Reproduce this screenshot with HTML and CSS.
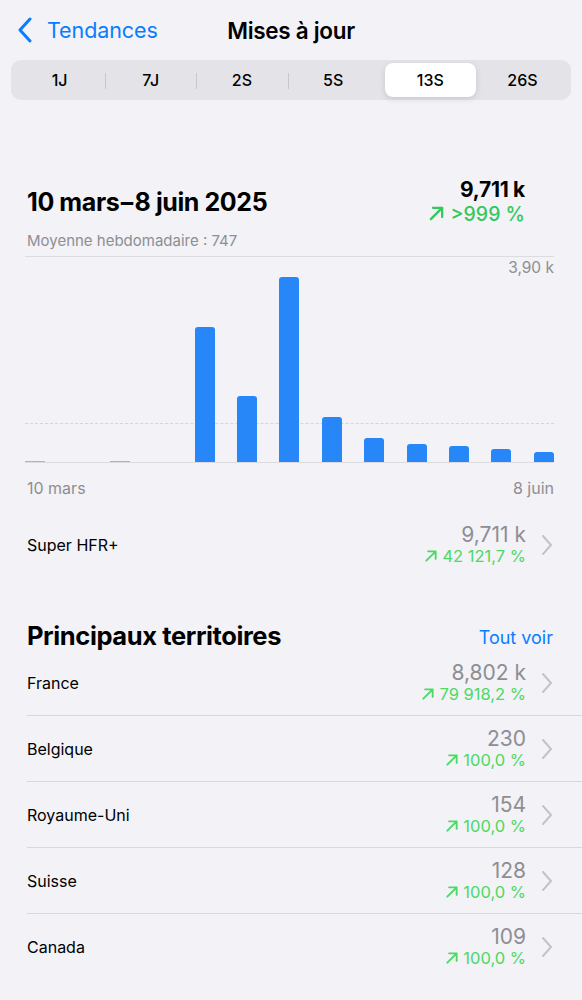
FILE: index.html
```html
<!DOCTYPE html>
<html lang="fr">
<head>
    <meta charset="UTF-8">
    <meta name="viewport" content="width=device-width, initial-scale=1.0">
    <title>Mises à jour</title>
    <link rel="stylesheet" href="styles.css">
</head>
<body>
    <header class="nav">
        <a class="back" href="#">
            <svg width="16" height="26" viewBox="0 0 16 26"><polyline points="13,2 3,13 13,24" fill="none" stroke="#0a7cff" stroke-width="3" stroke-linecap="round" stroke-linejoin="round"/></svg>
            <span>Tendances</span>
        </a>
        <h1 class="nav-title">Mises à jour</h1>
        <div></div>
    </header>

    <div class="segments">
        <div class="seg">1J</div>
        <div class="seg divided">7J</div>
        <div class="seg divided">2S</div>
        <div class="seg divided">5S</div>
        <div class="seg active">13S</div>
        <div class="seg">26S</div>
    </div>

    <section class="summary">
        <h2 class="period">10 mars&#8202;–&#8202;8 juin 2025</h2>
        <div class="total">
            <div class="total-value">9,711 k</div>
            <div class="total-trend">
                <svg class="arrow" width="17" height="17" viewBox="0 0 12 12"><path d="M2 10 L10 2 M3.5 2 H10 V8.5" fill="none" stroke="currentColor" stroke-width="1.6" stroke-linecap="round" stroke-linejoin="round"/></svg>
                &gt;999 %
            </div>
        </div>
    </section>
    <p class="average">Moyenne hebdomadaire : 747</p>

    <div class="chart">
        <span class="chart-max">3,90 k</span>
        <div class="chart-avg"></div>
        <div class="bars" id="bars"></div>
    </div>
    <div class="axis">
        <span>10 mars</span>
        <span>8 juin</span>
    </div>

    <div class="row single">
        <div class="row-label">Super HFR+</div>
        <div class="row-values">
            <div class="row-value">9,711 k</div>
            <div class="row-trend"><svg class="arrow" width="14" height="14" viewBox="0 0 12 12"><path d="M2 10 L10 2 M3.5 2 H10 V8.5" fill="none" stroke="currentColor" stroke-width="1.6" stroke-linecap="round" stroke-linejoin="round"/></svg> 42 121,7 %</div>
        </div>
        <svg class="chev" width="12" height="22" viewBox="0 0 12 22"><polyline points="2,2 10,11 2,20" fill="none" stroke="#c4c4c7" stroke-width="2" stroke-linecap="round" stroke-linejoin="round"/></svg>
    </div>

    <div class="section-head">
        <h2>Principaux territoires</h2>
        <a href="#">Tout voir</a>
    </div>

    <div class="list" id="list"></div>

    <script>
        (function(){
            var bars = [1, 0, 1, 0, 135, 66, 185, 45, 24, 18, 16, 13, 10];
            var barsEl = document.getElementById("bars");
            for(var i = 0; i < bars.length; i++){
                var b = document.createElement("div");
                b.className = bars[i] < 3 ? "bar tiny" : "bar";
                b.style.height = bars[i] + "px";
                barsEl.appendChild(b);
            }

            var rows = [
                ["France", "8,802 k", "79 918,2 %"],
                ["Belgique", "230", "100,0 %"],
                ["Royaume-Uni", "154", "100,0 %"],
                ["Suisse", "128", "100,0 %"],
                ["Canada", "109", "100,0 %"]
            ];
            var arrow = '<svg class="arrow" width="14" height="14" viewBox="0 0 12 12"><path d="M2 10 L10 2 M3.5 2 H10 V8.5" fill="none" stroke="currentColor" stroke-width="1.6" stroke-linecap="round" stroke-linejoin="round"/></svg>';
            var chev = '<svg class="chev" width="12" height="22" viewBox="0 0 12 22"><polyline points="2,2 10,11 2,20" fill="none" stroke="#c4c4c7" stroke-width="2" stroke-linecap="round" stroke-linejoin="round"/></svg>';
            var list = document.getElementById("list");
            for(var j = 0; j < rows.length; j++){
                var r = document.createElement("div");
                r.className = "row";
                r.innerHTML = '<div class="row-label">' + rows[j][0] + '</div>' +
                    '<div class="row-values"><div class="row-value">' + rows[j][1] + '</div>' +
                    '<div class="row-trend">' + arrow + ' ' + rows[j][2] + '</div></div>' + chev;
                list.appendChild(r);
            }
        })();
    </script>
</body>
</html>
```

FILE: styles.css
```css
*{margin: 0;padding: 0;box-sizing: border-box;}
body{
    background: #f2f2f7;
    font-family: Inter, "Noto Sans", sans-serif;
    color: #000000;
    width: 582px;
}
a{
    text-decoration: none;
    color: #0a7cff;
}

/* barre de navigation */
.nav{
    height: 60px;
    display: grid;
    grid-template-columns: 1fr auto 1fr;
    align-items: center;
}
.back{
    display: flex;
    align-items: center;
    padding-left: 17px;
    font-size: 21.5px;
    letter-spacing: -0.1px;
}
.back svg{
    margin-right: 14px;
}
.nav-title{
    font-size: 22.5px;
    font-weight: 600;
    letter-spacing: -0.3px;
}

/* sélecteur de période */
.segments{
    margin: 0 11px;
    height: 40px;
    padding: 3px;
    display: flex;
    background: #e3e3e8;
    border-radius: 10px;
}
.seg{
    flex: 1;
    position: relative;
    display: flex;
    align-items: center;
    justify-content: center;
    font-size: 16px;
    font-weight: 500;
    border-radius: 8px;
}
.seg.divided::before{
    content: "";
    position: absolute;
    left: 0;
    top: 10px;
    height: 16px;
    border-left: 1px solid #c7c7cc;
}
.seg.active{
    background: #ffffff;
    margin: 0 1px 0 6px;
    box-shadow: 0 2px 6px rgba(0,0,0,.12);
}

/* résumé */
.summary{
    margin-top: 78px;
    padding: 0 57px 0 27px;
    display: flex;
    justify-content: space-between;
    align-items: center;
}
.period{
    font-size: 25px;
    font-weight: 700;
    letter-spacing: -0.4px;
    line-height: 30px;
}
.total{
    text-align: right;
}
.total-value{
    font-size: 21px;
    font-weight: 700;
    line-height: 24px;
    letter-spacing: -0.3px;
}
.total-trend{
    font-size: 19.5px;
    font-weight: 500;
    line-height: 24px;
    color: #34c759;
}
.arrow{
    vertical-align: -1px;
}
.average{
    margin: 6px 0 0 27px;
    font-size: 15px;
    line-height: 18px;
    color: #8e8e93;
}

/* graphique */
.chart{
    position: relative;
    margin: 6px 28px 0 25px;
    height: 207px;
    border-top: 1px solid #dcdce0;
    border-bottom: 1px solid #dcdce0;
}
.chart-max{
    position: absolute;
    right: 0;
    top: 1px;
    font-size: 15.5px;
    color: #8e8e93;
}
.chart-avg{
    position: absolute;
    left: 0;
    right: 0;
    bottom: 38px;
    border-top: 1px dashed #d4d4d9;
}
.bars{
    height: 100%;
    display: flex;
    justify-content: space-between;
    align-items: flex-end;
}
.bar{
    width: 20px;
    background: #2787f8;
    border-radius: 3px 3px 0 0;
    position: relative;
}
.bar.tiny{
    background: #8cbcf8;
    border-radius: 0;
}
.axis{
    margin: 16px 28px 0 27px;
    display: flex;
    justify-content: space-between;
    font-size: 16px;
    line-height: 18px;
    color: #8e8e93;
}

/* lignes */
.row{
    height: 66px;
    display: flex;
    align-items: center;
    padding-right: 29px;
    margin-left: 27px;
    border-bottom: 1px solid #d8d8dc;
}
.row.single{
    margin-top: 15px;
    border-bottom: none;
}
.list .row:last-child{
    border-bottom: none;
}
.row-label{
    flex: 1;
    font-size: 16px;
}
.row-values{
    text-align: right;
    margin-right: 15px;
}
.row-value{
    font-size: 21px;
    line-height: 22px;
    color: #8e8e93;
}
.row-trend{
    font-size: 16.5px;
    line-height: 20px;
    color: #4cd964;
}
.section-head{
    margin-top: 42px;
    padding: 0 29px 0 27px;
    height: 30px;
    display: flex;
    justify-content: space-between;
    align-items: center;
}
.section-head h2{
    font-size: 25.5px;
    font-weight: 700;
    letter-spacing: -0.4px;
}
.section-head a{
    font-size: 18px;
    padding-top: 4px;
}
```
